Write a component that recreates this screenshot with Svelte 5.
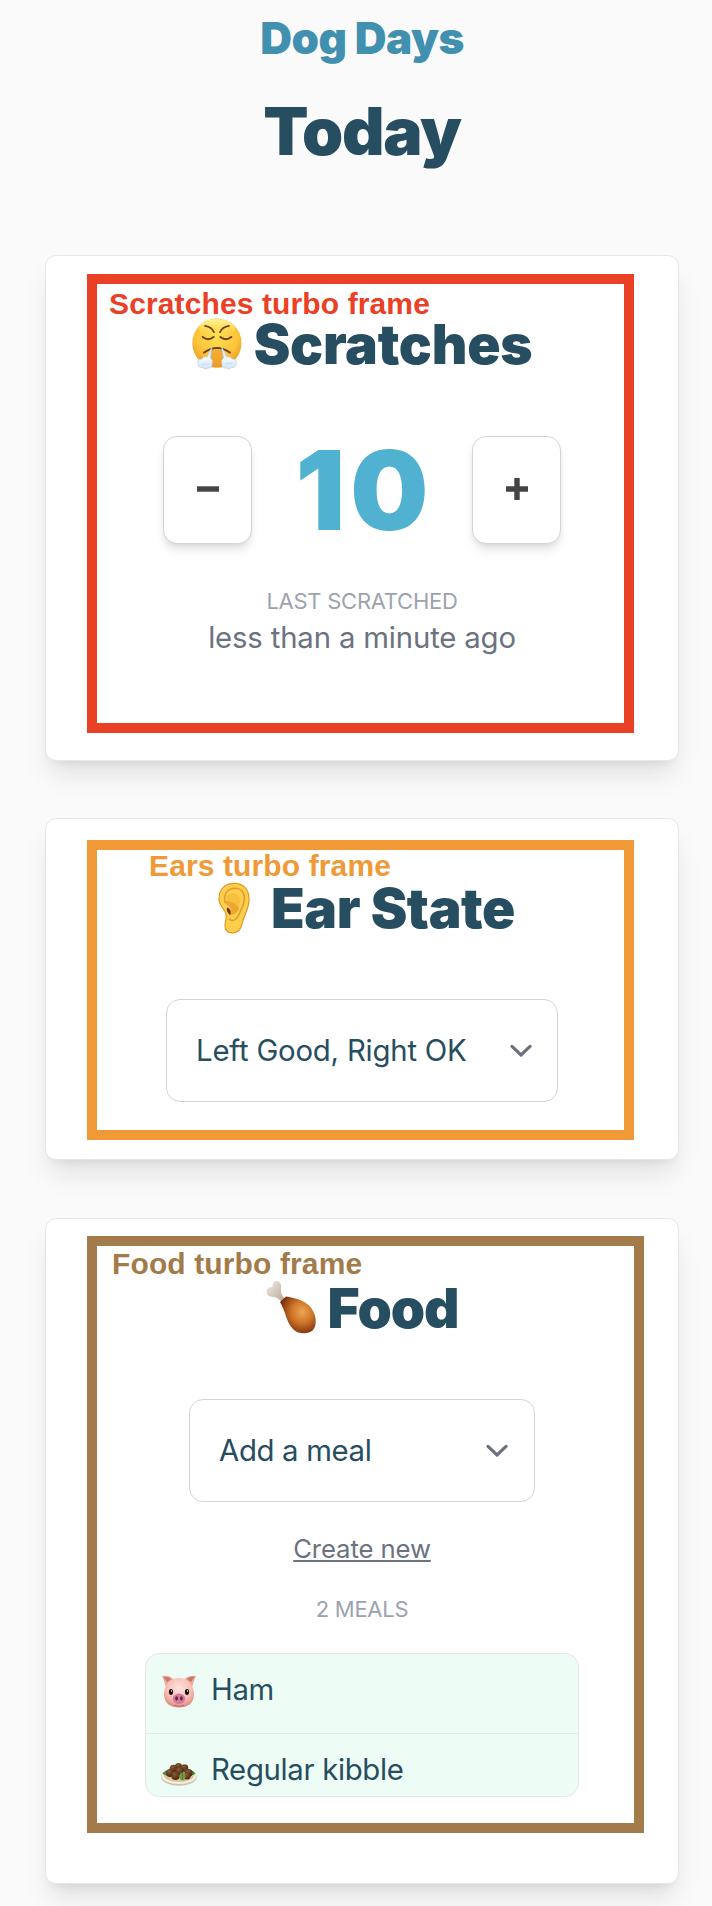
<script>
  const meals = [
    { icon: 'pig', name: 'Ham' },
    { icon: 'kibble', name: 'Regular kibble' }
  ];
  let count = $state(10);
</script>

{#snippet chevron()}
  <svg class="chevron" viewBox="0 0 22 14" fill="none" stroke="#6b7280" stroke-width="3.2" stroke-linecap="round" stroke-linejoin="round">
    <path d="M2 2.4 L11 11 L20 2.4" />
  </svg>
{/snippet}

{#snippet huff()}
  <svg class="emoji" viewBox="0 0 50 52">
    <defs>
      <radialGradient id="face" cx=".5" cy=".36" r=".65">
        <stop offset="0" stop-color="#ffe04f" /><stop offset=".65" stop-color="#fcc43a" /><stop offset="1" stop-color="#ea9722" />
      </radialGradient>
      <linearGradient id="sheen" x1="0" y1="0" x2="0" y2="1">
        <stop offset="0" stop-color="#fff79b" /><stop offset="1" stop-color="#ffe04f" stop-opacity="0" />
      </linearGradient>
      <linearGradient id="steam" x1="0" y1="0" x2="0" y2="1">
        <stop offset="0" stop-color="#c3d9ec" /><stop offset=".5" stop-color="#f4f9fe" /><stop offset="1" stop-color="#d3e5f8" />
      </linearGradient>
    </defs>
    <circle cx="24.9" cy="25" r="24.6" fill="url(#face)" />
    <ellipse cx="25" cy="10" rx="18" ry="9" fill="url(#sheen)" />
    <path d="M19 32 H31 L33 48 Q25 51 17 48Z" fill="#f09a26" opacity=".65" />
    <g fill="none" stroke="#70400b" stroke-linecap="round">
      <path d="M13 7.8 Q20 9 22 14.2" stroke-width="1.7" />
      <path d="M37 7.8 Q30 9 28 14.2" stroke-width="1.7" />
      <path d="M10.7 19 Q16 23.4 21.6 19" stroke-width="2" />
      <path d="M28.4 19 Q34 23.4 39.3 19" stroke-width="2" />
      <path d="M12 34.6 Q24.9 25.5 38 34.6" stroke-width="1.9" />
    </g>
    <path d="M20 29 Q16 35 15.4 39 Q11 37.8 10 41 Q4.5 41 6 45.5 Q6 50 10.5 49.5 Q13 52.5 16 50 Q20.5 50.5 20 46 Q21.5 42 18.5 40 Z" fill="url(#steam)" stroke="#a9c9ec" stroke-width=".6" />
    <path d="M29.5 29 Q33.8 35 34.4 39 Q38.8 37.8 40 41 Q45.5 41 44 45.5 Q44 50 39.5 49.5 Q37 52.5 34 50 Q29.5 50.5 30 46 Q28.5 42 31.5 40 Z" fill="url(#steam)" stroke="#a9c9ec" stroke-width=".6" />
    <path d="M10 46 q2 1.6 3.4-.5 q2 2 4-.2 M33 45.5 q2 1.6 3.4-.5 q2 2 4-.2" fill="none" stroke="#b4d2f2" stroke-width=".8" />
  </svg>
{/snippet}

{#snippet ear()}
  <svg class="emoji" viewBox="0 0 50 52">
    <path d="M10 17 C10 7 16 1.4 25.5 1.3 C35 1.4 40.3 8 40 18 C39.8 26 36.5 31 34.5 37 C32.5 43.5 32 50.5 23.5 50.8 C18 51 15.8 47.5 16 43.5 C16.2 39 18 37 17 32 C16 27 10 24 10 17Z" fill="#fdcf4d" stroke="#df981f" stroke-width="1.2" />
    <path d="M15.8 20 C14.5 11 19 6.4 26 6.3 C34.5 6.4 36.4 14 35 20 C33.5 26 31.5 29.5 28.5 35 C25.5 39.5 22.5 39 20.5 37.2" fill="none" stroke="#e09c2b" stroke-width="1.5" stroke-linecap="round" />
    <path d="M16.5 17 C18.5 9.5 31 9 31.2 18 C31 23 29.8 26 26.6 29.3 C25 31 23 31.5 21.4 31 L24 26 L29 26Z" fill="#f6bf40" />
    <path d="M15.8 18 C21 19.8 28 21 30 27 C28 31 25 32.5 21.4 33 C24 29 22 25 16 21.5Z" fill="#eaa732" />
    <path d="M18 25.5 C21.5 26.5 22.5 29.5 21.2 33.4 C20 31.8 17 30 18 25.5Z" fill="#65380a" />
  </svg>
{/snippet}

{#snippet drumstick()}
  <svg class="emoji raised" viewBox="0 0 50 52">
    <defs>
      <radialGradient id="meat" cx=".62" cy=".42" r=".65">
        <stop offset="0" stop-color="#eda653" /><stop offset=".45" stop-color="#cf7628" /><stop offset="1" stop-color="#74290c" />
      </radialGradient>
      <linearGradient id="bone" x1="0" y1="0" x2="1" y2="1">
        <stop offset="0" stop-color="#f4eee7" /><stop offset="1" stop-color="#b2a492" />
      </linearGradient>
    </defs>
    <path d="M6.500 6 C6-1.500 14-2 15 4 C15.700 8.500 13 12 19 17.500 L15.500 21 C12 16 8.500 16.500 4.500 15.500 C-2 13.500 0 5 6.500 6Z" fill="url(#bone)" />
    <path d="M14 21 L20 15.5 C28 17 38 19 43.5 25 C50 32 52 43 47 49 C42 54 31 53 27 48 C20 41 20 31 14 21Z" fill="url(#meat)" />
  </svg>
{/snippet}

{#snippet pig()}
  <svg class="meal-icon" viewBox="0 0 36 36">
    <defs>
      <radialGradient id="skin" cx=".5" cy=".35" r=".65">
        <stop offset="0" stop-color="#ffe3de" /><stop offset=".65" stop-color="#f8beb4" /><stop offset="1" stop-color="#df8b80" />
      </radialGradient>
    </defs>
    <path d="M1 2 Q9 1 13 6 L5 13 Q3 6 1 2Z M35 2 Q27 1 23 6 L31 13 Q33 6 35 2Z" fill="#eda79c" />
    <path d="M2.5 2.8 Q8 2.6 10 5.2 L6 8Z M33.5 2.8 Q28 2.6 26 5.2 L30 8Z" fill="#c9766c" />
    <path d="M18 4 C28 4 33 12 33 20 C33 29 27 33.5 18 33.5 C9 33.5 3 29 3 20 C3 12 8 4 18 4Z" fill="url(#skin)" />
    <ellipse cx="10" cy="18" rx="2.1" ry="3" fill="#171215" />
    <ellipse cx="26" cy="18" rx="2.1" ry="3" fill="#171215" />
    <circle cx="10.5" cy="17" r=".7" fill="#fff" /><circle cx="26.5" cy="17" r=".7" fill="#fff" />
    <ellipse cx="18" cy="24.8" rx="6.3" ry="5.2" fill="#d3799b" />
    <ellipse cx="15.6" cy="24.4" rx="1.4" ry="2.1" fill="#702443" />
    <ellipse cx="20.4" cy="24.4" rx="1.4" ry="2.1" fill="#702443" />
    <path d="M13 31.2 Q18 33.5 23 31.2" fill="none" stroke="#bd6c63" stroke-width="1" />
  </svg>
{/snippet}

{#snippet kibble()}
  <svg class="meal-icon" viewBox="0 0 36 36">
    <defs>
      <radialGradient id="ball" cx=".4" cy=".3" r=".7">
        <stop offset="0" stop-color="#8a5c38" /><stop offset="1" stop-color="#472510" />
      </radialGradient>
    </defs>
    <ellipse cx="18" cy="23" rx="17.8" ry="8.7" fill="#c9c3ae" />
    <ellipse cx="18" cy="22" rx="17.5" ry="8" fill="#f3efdf" />
    <ellipse cx="18" cy="21.5" rx="15" ry="6.5" fill="#dcc49a" />
    <path d="M1.5 20 Q4 15 8 17 L7 22Z M34.5 20 Q32 15 28 17 L29 22Z" fill="#50873a" />
    <g fill="url(#ball)">
      <circle cx="17.5" cy="12.5" r="3.5" /><circle cx="12.5" cy="14.5" r="3.8" /><circle cx="23.5" cy="14" r="3.8" />
      <circle cx="9" cy="19" r="4" /><circle cx="27.5" cy="19" r="4" /><circle cx="18.5" cy="17" r="4" />
      <circle cx="14.5" cy="22" r="4.1" /><circle cx="26" cy="22" r="3.5" />
    </g>
    <ellipse cx="21.5" cy="22.5" rx="3" ry="4" fill="#76983d" />
    <path d="M21.5 19.5 V25" stroke="#4d7428" stroke-width=".8" />
  </svg>
{/snippet}

<main class="page">
  <header>
    <p class="brand">Dog Days</p>
    <h1>Today</h1>
  </header>

  <section class="card scratches">
    <h2>{@render huff()}<span>Scratches</span></h2>
    <div class="counter">
      <button aria-label="Decrease" onclick={() => count--}>
        <svg viewBox="0 0 22 22"><path d="M0 11 H22" stroke="#444" stroke-width="5.4" /></svg>
      </button>
      <span class="count">{count}</span>
      <button class="plus" aria-label="Increase" onclick={() => count++}>
        <svg viewBox="0 0 22 22"><path d="M0 11 H22 M11 0 V22" stroke="#444" stroke-width="5.4" /></svg>
      </button>
    </div>
    <p class="caption">LAST SCRATCHED</p>
    <p class="when">less than a minute ago</p>
    <div class="frame red"><span>Scratches turbo frame</span></div>
  </section>

  <section class="card ears">
    <h2>{@render ear()}<span>Ear State</span></h2>
    <div class="select wide"><span>Left Good, Right OK</span>{@render chevron()}</div>
    <div class="frame orange"><span>Ears turbo frame</span></div>
  </section>

  <section class="card food">
    <h2>{@render drumstick()}<span>Food</span></h2>
    <div class="select narrow"><span>Add a meal</span>{@render chevron()}</div>
    <a class="create" href="#new">Create new</a>
    <p class="caption">2 MEALS</p>
    <ul>
      {#each meals as meal}
        <li>
          {#if meal.icon === 'pig'}{@render pig()}{:else}{@render kibble()}{/if}
          <span>{meal.name}</span>
        </li>
      {/each}
    </ul>
    <div class="frame brown"><span>Food turbo frame</span></div>
  </section>
</main>

<style>
  :global(body) { background: #fafafa; }
  .page {
    box-sizing: border-box;
    height: 1906px;
    overflow: hidden;
    padding: 13px 33px 0 45px;
    font-family: Inter, sans-serif;
    font-size: 29.33px;
    letter-spacing: -.2px;
    color: #264d60;
    background: #fafafa;
  }
  p, h1, h2, ul { margin: 0; padding: 0; }
  header { display: flex; flex-direction: column; align-items: center; gap: 33px; margin-bottom: 89px; }
  .brand { font-size: 44px; line-height: 50px; font-weight: 900; letter-spacing: -.011em; color: #4190b0; }
  h1 { font-size: 66px; line-height: 70px; font-weight: 900; letter-spacing: -.02em; }
  .card {
    position: relative;
    box-sizing: border-box;
    display: flex;
    flex-direction: column;
    align-items: center;
    background: #fff;
    border: 1px solid #e5e7eb;
    border-radius: 11px;
    padding-top: 59px;
    box-shadow: 0 18.3px 27.5px -5.5px rgba(0, 0, 0, .1), 0 7.3px 11px -7.3px rgba(0, 0, 0, .1);
  }
  .scratches { height: 506px; padding-top: 58px; margin-bottom: 57px; }
  .ears { height: 342px; margin-bottom: 58px; }
  .food { height: 666px; }
  h2 { display: flex; align-items: center; gap: 12px; font-size: 55px; line-height: 60px; font-weight: 900; letter-spacing: -.005em; white-space: nowrap; }
  .ears h2 { letter-spacing: -.008em; }
  .food h2 { letter-spacing: -.02em; }
  .emoji { width: 50px; height: 52px; flex: none; overflow: visible; }
  .raised { margin-bottom: 3px; }
  .counter { display: flex; align-items: center; justify-content: space-between; width: 398px; margin-top: 62px; }
  button {
    display: grid;
    place-items: center;
    box-sizing: border-box;
    width: 89px;
    height: 108px;
    padding: 0;
    background: #fff;
    border: 1px solid #d1d5db;
    border-radius: 14px;
    box-shadow: 0 7.3px 11px -2px rgba(0, 0, 0, .1), 0 3.7px 7px -3.7px rgba(0, 0, 0, .1);
  }
  button svg { width: 22px; height: 22px; margin-top: -2px; }
  .plus { padding-left: 2px; }
  .count { font-size: 110px; line-height: 108px; font-weight: 900; letter-spacing: 5px; margin-right: -5px; color: #50b1d0; }
  .caption { font-size: 22px; line-height: 30px; color: #9ca3af; margin-top: 42px; letter-spacing: -.26px; }
  .when { line-height: 40px; margin-top: 2px; color: #6b7280; letter-spacing: -.16px; }
  .select {
    display: flex;
    align-items: center;
    justify-content: space-between;
    box-sizing: border-box;
    height: 103px;
    margin-top: 61px;
    padding: 0 25px 0 29px;
    border: 1px solid #d1d5db;
    border-radius: 14px;
  }
  .wide { width: 392px; }
  .narrow { width: 346px; padding-right: 26px; letter-spacing: -.33px; }
  .chevron { width: 22px; height: 14px; }
  .create { margin-top: 29px; font-size: 25.67px; line-height: 36px; color: #6b7280; letter-spacing: -.1px; text-decoration: underline; }
  .food .caption { margin-top: 27px; }
  ul { box-sizing: border-box; width: 434px; height: 144px; margin-top: 29px; overflow: hidden; list-style: none; background: #eefcf6; border: 1px solid #e5e7eb; border-radius: 14px; letter-spacing: -.32px; }
  li { display: flex; align-items: flex-start; gap: 14px; padding: 16px 0 0 15px; height: 63px; line-height: 40px; border-bottom: 1px solid #e0ebe8; }
  .meal-icon { width: 36px; height: 36px; margin-top: 4px; flex: none; }
  .frame { position: absolute; box-sizing: border-box; left: 41px; width: 547px; border: 10px solid; pointer-events: none; font: bold 30px/34px "Liberation Sans", sans-serif; letter-spacing: .12px; white-space: nowrap; }
  .frame span { display: block; }
  .red { top: 18px; height: 459px; color: #ea4025; padding: 3px 12px; }
  .orange { top: 21px; height: 300px; color: #f09a37; padding: 0 52px; }
  .orange span { margin-top: -1px; }
  .brown { top: 17px; width: 557px; height: 597px; color: #a37b4a; padding: 1px 15px; }
</style>
